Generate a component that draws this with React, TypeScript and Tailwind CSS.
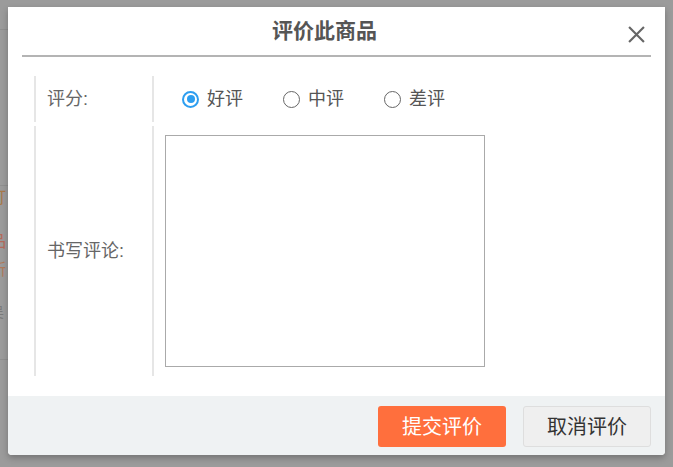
import React from 'react';

const font = { fontFamily: '"Liberation Sans", "Noto Sans CJK SC", sans-serif' };

const options = [
  { label: '好评', checked: true },
  { label: '中评', checked: false },
  { label: '差评', checked: false },
];

function Radio({ checked }: { checked: boolean }) {
  return checked ? (
    <span className="flex h-[17px] w-[17px] items-center justify-center rounded-full border-2 border-[#2d9ef0]">
      <span className="h-[8px] w-[8px] rounded-full bg-[#2d9ef0]" />
    </span>
  ) : (
    <span className="h-[17px] w-[17px] rounded-full border-[1.5px] border-[#666]" />
  );
}

export default function App() {
  return (
    <div className="relative h-[467px] w-[673px] overflow-hidden bg-[#9b9b9b]" style={font}>
      {/* page behind the overlay */}
      <div className="absolute left-0 top-0 h-full w-[8px] overflow-hidden">
        <div className="h-[30px] border-b border-[#8f8f8f]" />
        <div className="mt-[155px] h-[1px] bg-[#8f8f8f]" />
        <div className="absolute left-[-10px] top-[186px] text-[16px] text-[#a8794a]">订</div>
        <div className="absolute left-[-10px] top-[230px] text-[16px] text-[#b56a5a]">品</div>
        <div className="absolute left-[-10px] top-[258px] text-[16px] text-[#b07a5a]">所</div>
        <div className="absolute left-[-10px] top-[302px] text-[14px] text-[#7a7a7a]">吴</div>
        <div className="absolute left-0 top-[359px] h-[1px] w-full bg-[#8f8f8f]" />
      </div>

      <div className="absolute left-[8px] top-[7px] flex h-[448px] w-[657px] flex-col rounded-b-[4px] bg-white shadow-[0_3px_6px_rgba(0,0,0,0.25)]">
        <div className="relative mx-[14px] flex h-[50px] items-center justify-center border-b-2 border-[#b4b4b4] pr-[24px]">
          <span className="text-[21px] font-bold text-[#555]">评价此商品</span>
          <svg className="absolute right-[6px] top-[19px] h-[17px] w-[17px]" viewBox="0 0 16 16" fill="none" stroke="#666" strokeWidth={2}>
            <path d="M1 1L15 15M15 1L1 15" />
          </svg>
        </div>

        <div className="ml-[26px] mt-[19px] flex flex-col gap-[4px]">
          <div className="flex h-[46px]">
            <div className="flex w-[118px] items-center border-l-2 border-[#e6e6e6] pl-[11px] text-[18px] text-[#666]">评分:</div>
            <div className="flex items-center border-l-2 border-[#e6e6e6] pl-[28px] text-[18px] text-[#555]">
              {options.map((o) => (
                <label key={o.label} className="mr-[40px] flex items-center gap-[8px]">
                  <Radio checked={o.checked} />
                  <span>{o.label}</span>
                </label>
              ))}
            </div>
          </div>
          <div className="flex h-[250px]">
            <div className="flex w-[118px] items-center border-l-2 border-[#e6e6e6] pl-[11px] text-[18px] text-[#666]">书写评论:</div>
            <div className="flex items-center border-l-2 border-[#e6e6e6] pl-[11px]">
              <textarea className="h-[232px] w-[320px] resize-none border border-[#aaa] outline-none" />
            </div>
          </div>
        </div>

        <div className="mt-auto flex h-[59px] items-start justify-end gap-[17px] rounded-b-[4px] bg-[#eff2f3] pr-[14px] pt-[10px]">
          <button className="h-[41px] w-[128px] rounded-[3px] bg-[#ff6f3d] text-[20px] text-white">提交评价</button>
          <button className="h-[41px] w-[128px] rounded-[3px] border border-[#dedede] bg-[#efefef] text-[20px] text-[#333]">取消评价</button>
        </div>
      </div>
    </div>
  );
}
